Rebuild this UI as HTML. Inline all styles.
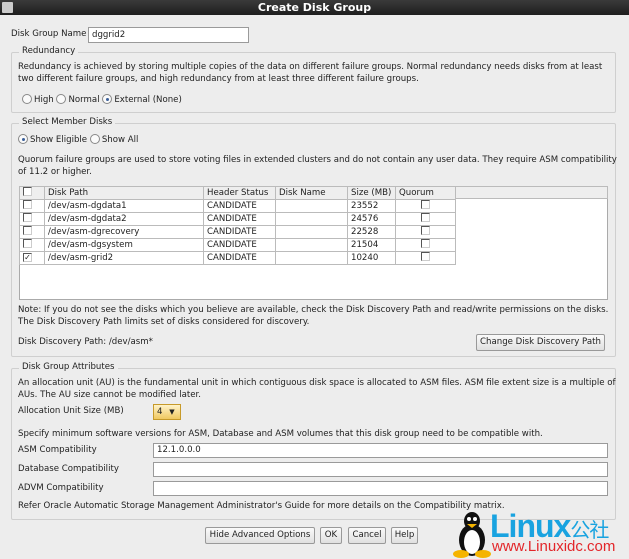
<!DOCTYPE html>
<html><head><meta charset="utf-8"><style>
*{box-sizing:border-box;margin:0;padding:0}
body{width:629px;height:559px;background:#ededed;font-family:"DejaVu Sans","Liberation Sans",sans-serif;font-size:8.6px;color:#222;position:relative;overflow:hidden}
.a{position:absolute;white-space:nowrap}
.title{left:0;top:0;width:629px;height:15px;background:linear-gradient(#3a3a3a,#1e1e1e);color:#fff;font-weight:bold;font-size:11px;text-align:center;line-height:15px}
.inp{position:absolute;background:#fff;border:1px solid #9a9a9a}
.fs{position:absolute;border:1px solid #cfcfcf;border-radius:2px}
.lg{position:absolute;background:#ededed;padding:0 3px}
.rad{display:inline-block;width:10px;height:10px;border:1px solid #888;border-radius:50%;background:#fafafa;vertical-align:-2px;margin-right:2px;position:relative}
.rad.on::after{content:"";position:absolute;left:2.5px;top:2.5px;width:3px;height:3px;border-radius:50%;background:#3a5f9a}
.cb{display:inline-block;width:9px;height:9px;border:1px solid #555;border-right-color:#ccc;border-bottom-color:#ccc;background:#fff;font-size:8px;line-height:7px;text-align:center}
table{position:absolute;left:19px;top:186px;border-collapse:collapse;background:#fff}
td{border:1px solid #bbb;height:12.5px;padding:0 3px;font-size:8.6px}
tr.h td{background:#eee}
.btn{position:absolute;border:1px solid #999;border-radius:2px;background:linear-gradient(#fafafa,#e0e0e0);text-align:center;line-height:15px;font-size:8.6px}
</style></head><body>
<div class="a title">Create Disk Group</div>
<div class="a" style="left:2px;top:2px;width:11px;height:11px;background:#ccc;border-radius:1px"></div>
<div class="a" style="left:11px;top:29px">Disk Group Name</div>
<div class="inp" style="left:88px;top:27px;width:161px;height:16px;padding:2px 3px">dggrid2</div>

<div class="fs" style="left:11px;top:52px;width:605px;height:61px"></div>
<div class="lg" style="left:19px;top:46px">Redundancy</div>
<div class="a" style="left:18px;top:62px">Redundancy is achieved by storing multiple copies of the data on different failure groups. Normal redundancy needs disks from at least</div>
<div class="a" style="left:18px;top:74px">two different failure groups, and high redundancy from at least three different failure groups.</div>
<div class="a" style="left:22px;top:94px"><span class="rad"></span>High <span class="rad"></span>Normal <span class="rad on"></span>External (None)</div>

<div class="fs" style="left:11px;top:123px;width:605px;height:234px"></div>
<div class="lg" style="left:19px;top:117px">Select Member Disks</div>
<div class="a" style="left:18px;top:134px"><span class="rad on"></span>Show Eligible <span class="rad"></span>Show All</div>
<div class="a" style="left:18px;top:155px">Quorum failure groups are used to store voting files in extended clusters and do not contain any user data. They require ASM compatibility</div>
<div class="a" style="left:18px;top:167px">of 11.2 or higher.</div>
<div class="a" style="left:19px;top:186px;width:589px;height:114px;background:#fff;border:1px solid #aaa"></div>
<table>
<tr class="h"><td style="width:25px"><span class="cb"></span></td><td style="width:159px">Disk Path</td><td style="width:72px">Header Status</td><td style="width:72px">Disk Name</td><td style="width:48px">Size (MB)</td><td style="width:60px">Quorum</td></tr>
<tr><td><span class="cb"></span></td><td>/dev/asm-dgdata1</td><td>CANDIDATE</td><td></td><td>23552</td><td style="text-align:center"><span class="cb"></span></td></tr>
<tr><td><span class="cb"></span></td><td>/dev/asm-dgdata2</td><td>CANDIDATE</td><td></td><td>24576</td><td style="text-align:center"><span class="cb"></span></td></tr>
<tr><td><span class="cb"></span></td><td>/dev/asm-dgrecovery</td><td>CANDIDATE</td><td></td><td>22528</td><td style="text-align:center"><span class="cb"></span></td></tr>
<tr><td><span class="cb"></span></td><td>/dev/asm-dgsystem</td><td>CANDIDATE</td><td></td><td>21504</td><td style="text-align:center"><span class="cb"></span></td></tr>
<tr><td><span class="cb">✓</span></td><td>/dev/asm-grid2</td><td>CANDIDATE</td><td></td><td>10240</td><td style="text-align:center"><span class="cb"></span></td></tr>
</table>
<div class="a" style="left:455px;top:186px;width:153px;height:13px;background:#eee;border:1px solid #bbb"></div>
<div class="a" style="left:18px;top:305px">Note: If you do not see the disks which you believe are available, check the Disk Discovery Path and read/write permissions on the disks.</div>
<div class="a" style="left:18px;top:317px">The Disk Discovery Path limits set of disks considered for discovery.</div>
<div class="a" style="left:18px;top:337px">Disk Discovery Path: /dev/asm*</div>
<div class="btn" style="left:476px;top:334px;width:129px;height:17px">Change Disk Discovery Path</div>

<div class="fs" style="left:11px;top:368px;width:605px;height:152px"></div>
<div class="lg" style="left:19px;top:362px">Disk Group Attributes</div>
<div class="a" style="left:18px;top:378px">An allocation unit (AU) is the fundamental unit in which contiguous disk space is allocated to ASM files. ASM file extent size is a multiple of</div>
<div class="a" style="left:18px;top:390px">AUs. The AU size cannot be modified later.</div>
<div class="a" style="left:18px;top:406px">Allocation Unit Size (MB)</div>
<div class="a" style="left:153px;top:404px;width:28px;height:16px;border:1px solid #c79a2a;background:linear-gradient(#fff2c8,#f0c860);padding:2px 3px">4 <span style="font-size:7px;margin-left:4px">▼</span></div>
<div class="a" style="left:18px;top:429px">Specify minimum software versions for ASM, Database and ASM volumes that this disk group need to be compatible with.</div>
<div class="a" style="left:18px;top:445px">ASM Compatibility</div>
<div class="inp" style="left:153px;top:443px;width:455px;height:15px;padding:1px 3px">12.1.0.0.0</div>
<div class="a" style="left:18px;top:464px">Database Compatibility</div>
<div class="inp" style="left:153px;top:462px;width:455px;height:15px"></div>
<div class="a" style="left:18px;top:483px">ADVM Compatibility</div>
<div class="inp" style="left:153px;top:481px;width:455px;height:15px"></div>
<div class="a" style="left:18px;top:501px">Refer Oracle Automatic Storage Management Administrator's Guide for more details on the Compatibility matrix.</div>

<div class="btn" style="left:205px;top:527px;width:110px;height:17px">Hide Advanced Options</div>
<div class="btn" style="left:320px;top:527px;width:22px;height:17px">OK</div>
<div class="btn" style="left:348px;top:527px;width:38px;height:17px">Cancel</div>
<div class="btn" style="left:391px;top:527px;width:27px;height:17px">Help</div>

<svg class="a" style="left:452px;top:510px" width="40" height="48" viewBox="0 0 40 48">
<ellipse cx="20" cy="30" rx="13" ry="16" fill="#111"/><ellipse cx="20" cy="32" rx="8" ry="12" fill="#fff"/>
<ellipse cx="20" cy="11" rx="8" ry="9" fill="#111"/><circle cx="17" cy="9" r="2" fill="#fff"/><circle cx="23" cy="9" r="2" fill="#fff"/>
<path d="M15 14 L25 14 L20 18Z" fill="#f5b400"/>
<ellipse cx="9" cy="44" rx="8" ry="4" fill="#f5b400"/><ellipse cx="31" cy="44" rx="8" ry="4" fill="#f5b400"/></svg>
<div class="a" style="left:490px;top:510px;font-family:'Liberation Sans',sans-serif;font-weight:bold;font-size:32px;color:#19a3e0;line-height:32px;letter-spacing:-1px">Linux<span style="font-family:'Noto Sans CJK SC',sans-serif;font-size:20px;font-weight:normal">公社</span></div>
<div class="a" style="left:492px;top:539px;font-family:'Liberation Sans',sans-serif;font-size:15px;color:#e3262a;line-height:16px">www.Linuxidc.com</div>
</body></html>
